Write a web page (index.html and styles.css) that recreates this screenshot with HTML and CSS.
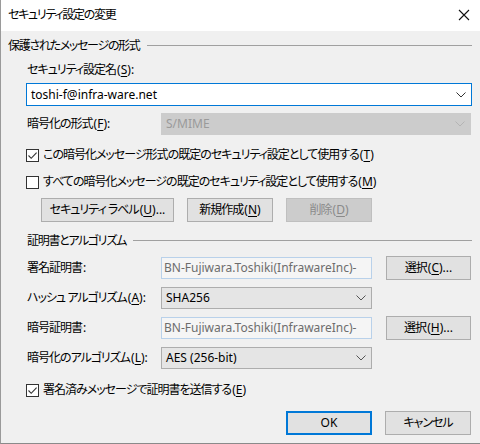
FILE: index.html
```html
<!DOCTYPE html>
<html lang="ja">
<head>
<meta charset="utf-8">
<title>セキュリティ設定の変更</title>
<link rel="stylesheet" href="styles.css">
</head>
<body>
<div class="dialog">
  <div class="titlebar">
    <span class="title">セキュリティ設定の変更</span>
    <svg class="close" width="12" height="12" viewBox="0 0 12 12"><path d="M1 1 L11 11 M11 1 L1 11" stroke="#111" stroke-width="1.1" fill="none"/></svg>
  </div>
  <div class="content">
    <div class="sec-head"><span class="hd">保護されたメッセージの形式</span><span class="rule"></span></div>
    <div class="indent">
      <div class="lbl-line">セキュリティ設定名<span class="m">(<u>S</u>):</span></div>
      <div class="combo focus full">
        <span class="val">toshi-f@infra-ware.net</span>
        <svg class="chev" width="10" height="6" viewBox="0 0 10 6"><path d="M0.5 0.5 L5 5 L9.5 0.5" stroke="#333" fill="none"/></svg>
      </div>
      <div class="row row-f">
        <span class="lbl">暗号化の形式<span class="m">(<u>F</u>):</span></span>
        <div class="combo disabled wide">
          <span class="val">S/MIME</span>
          <svg class="chev" width="10" height="6" viewBox="0 0 10 6"><path d="M0.5 0.5 L5 5 L9.5 0.5" stroke="#b4b4b4" fill="none"/></svg>
        </div>
      </div>
      <div class="check c1">
        <span class="box"><svg width="11" height="11" viewBox="0 0 11 11"><path d="M1.5 5.5 L4.2 8.3 L9.6 2.6" stroke="#333" stroke-width="1.1" fill="none"/></svg></span>
        <span>この暗号化メッセージ形式の既定のセキュリティ設定として使用する<span class="m">(<u>T</u>)</span></span>
      </div>
      <div class="check c2">
        <span class="box"></span>
        <span>すべての暗号化メッセージの既定のセキュリティ設定として使用する<span class="m">(<u>M</u>)</span></span>
      </div>
      <div class="btn-row">
        <button class="btn btn-label">セキュリティ&nbsp;ラベル<span class="m">(<u>U</u>)...</span></button>
        <button class="btn">新規作成<span class="m">(<u>N</u>)</span></button>
        <button class="btn dis">削除<span class="m">(<u>D</u>)</span></button>
      </div>
    </div>
    <div class="sec-head sub"><span class="hd">証明書とアルゴリズム</span><span class="rule"></span></div>
    <div class="indent">
      <div class="grid">
        <span class="lbl">署名証明書<span class="m">:</span></span>
        <div class="field"><span class="val">BN-Fujiwara.Toshiki(InfrawareInc)-</span></div>
        <button class="btn sel">選択<span class="m">(<u>C</u>)...</span></button>

        <span class="lbl">ハッシュ&nbsp;アルゴリズム<span class="m">(<u>A</u>):</span></span>
        <div class="combo list">
          <span class="val">SHA256</span>
          <svg class="chev" width="10" height="6" viewBox="0 0 10 6"><path d="M0.5 0.5 L5 5 L9.5 0.5" stroke="#555" fill="none"/></svg>
        </div>
        <span></span>

        <span class="lbl">暗号証明書<span class="m">:</span></span>
        <div class="field"><span class="val">BN-Fujiwara.Toshiki(InfrawareInc)-</span></div>
        <button class="btn sel">選択<span class="m">(<u>H</u>)...</span></button>

        <span class="lbl">暗号化のアルゴリズム<span class="m">(<u>L</u>):</span></span>
        <div class="combo list">
          <span class="val">AES (256-bit)</span>
          <svg class="chev" width="10" height="6" viewBox="0 0 10 6"><path d="M0.5 0.5 L5 5 L9.5 0.5" stroke="#555" fill="none"/></svg>
        </div>
        <span></span>
      </div>
      <div class="check c3">
        <span class="box"><svg width="11" height="11" viewBox="0 0 11 11"><path d="M1.5 5.5 L4.2 8.3 L9.6 2.6" stroke="#333" stroke-width="1.1" fill="none"/></svg></span>
        <span>署名済みメッセージで証明書を送信する<span class="m">(<u>E</u>)</span></span>
      </div>
    </div>
    <div class="footer">
      <button class="btn ok">OK</button>
      <button class="btn">キャンセル</button>
    </div>
  </div>
</div>
</body>
</html>
```
FILE: styles.css
```css
* { box-sizing: border-box; }
html, body { margin: 0; padding: 0; }
body {
  width: 480px;
  height: 444px;
  overflow: hidden;
  background: #f0f0f0;
  font-family: "Noto Sans", "Noto Sans CJK JP", sans-serif;
  font-size: 12px;
  line-height: 16px;
  color: #000;
  font-feature-settings: "palt";
  letter-spacing: -1px;
}
u { text-decoration: underline; text-underline-offset: 2px; text-decoration-thickness: 1px; }
.val, .m { letter-spacing: 0; }
.m { margin-left: 1px; }
.dialog {
  width: 480px;
  height: 444px;
  border-left: 1px solid #9a9a9a;
  border-bottom: 1px solid #8a8a8a;
  display: flex;
  flex-direction: column;
}
.titlebar {
  height: 31px;
  background: #fff;
  display: flex;
  align-items: center;
  justify-content: space-between;
  padding: 0 10px 2px 7px;
  flex: none;
}
.title { font-size: 12px; letter-spacing: -1.3px; }
.close { display: block; }
.content {
  flex: 1;
  padding: 7px 8px 0 7px;
}
.sec-head {
  height: 16px;
  display: flex;
  align-items: center;
  gap: 7px;
}
.sec-head .hd { letter-spacing: -1.3px; }
.sec-head .rule {
  flex: 1;
  height: 1px;
  background: #a0a0a0;
  margin-top: -1px;
}
.sec-head.sub { margin-top: 11px; padding-left: 19px; }
.indent { padding-left: 18px; }
.lbl-line { margin-top: 8px; height: 16px; padding-left: 1px; }
.lbl { white-space: nowrap; }
.combo {
  height: 23px;
  display: flex;
  align-items: center;
  justify-content: space-between;
  padding: 0 5px 0 4px;
  border: 1px solid #adadad;
}
.combo.full { margin-top: 5px; width: 446px; }
.combo.focus { background: #fff; border-color: #0078d7; }
.combo.disabled { background: #cccccc; border-color: #cccccc; color: #9a9a9a; }
.combo.wide { width: 310px; height: 22px; }
.combo.list { background: #e5e5e5; border-color: #adadad; height: 22px; }
.chev { display: block; }
.row { display: flex; align-items: center; }
.row-f { margin-top: 6px; height: 23px; }
.row-f .lbl { width: 135px; padding-left: 1px; }
.check {
  display: flex;
  align-items: center;
  gap: 4px;
  height: 16px;
  white-space: nowrap;
}
.c1 { margin-top: 12px; }
.c2 { margin-top: 11px; }
.c3 { margin-top: 12px; }
.box {
  width: 13px;
  height: 13px;
  border: 1px solid #333;
  background: #fff;
  flex: none;
  display: flex;
  align-items: center;
  justify-content: center;
}
.box svg { display: block; }
.btn-row {
  margin-top: 8px;
  padding-left: 15px;
  display: flex;
  gap: 13px;
}
.btn {
  font: inherit;
  font-feature-settings: "palt";
  letter-spacing: -1px;
  width: 86px;
  height: 24px;
  padding: 0;
  background: #e1e1e1;
  border: 1px solid #adadad;
  color: #000;
  display: flex;
  align-items: center;
  justify-content: center;
  white-space: nowrap;
}
.btn-label { width: 133px; }
.btn.dis { background: #cccccc; border-color: #bfbfbf; color: #8a8a8a; }
.grid {
  margin-top: 7px;
  display: grid;
  grid-template-columns: 121px 211px 85px;
  column-gap: 14px;
  grid-auto-rows: 24px;
  row-gap: 6px;
  align-items: center;
}
.grid .lbl { padding-left: 1px; }
.field {
  height: 22px;
  border: 1px solid #b9d1ea;
  background: #f5f5f5;
  color: #6d6d6d;
  display: flex;
  align-items: center;
  padding-left: 2px;
  overflow: hidden;
  white-space: nowrap;
}
.btn.sel { width: 85px; }
.footer {
  margin-top: 13px;
  display: flex;
  justify-content: flex-end;
  gap: 13px;
  padding-right: 1px;
}
.btn.ok { width: 86px; border: 2px solid #0078d7; letter-spacing: 0; }
```
